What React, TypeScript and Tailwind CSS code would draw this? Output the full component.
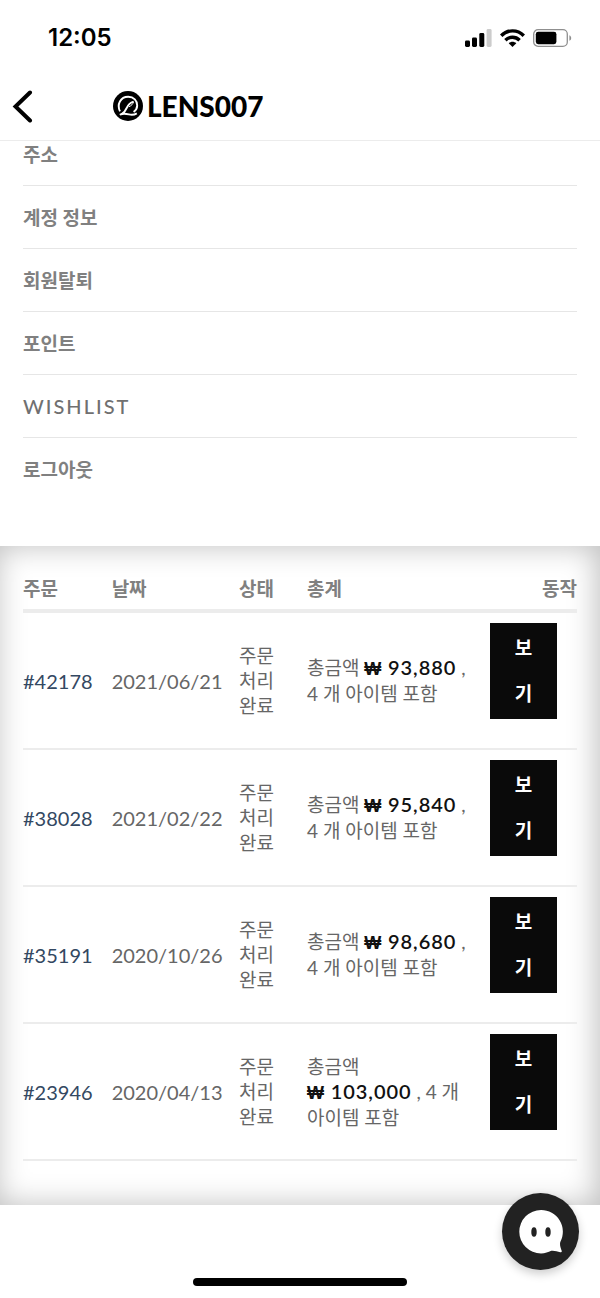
import { Fragment } from 'react';
import type { FC } from 'react';

type Order = {
  id: string;
  date: string;
  total: string;
  count: number;
};

const menuItems = ['주소', '계정 정보', '회원탈퇴', '포인트', 'WISHLIST', '로그아웃'];

const statusLines = ['주문', '처리', '완료'];

const orders: Order[] = [
  { id: '42178', date: '2021/06/21', total: '93,880', count: 4 },
  { id: '38028', date: '2021/02/22', total: '95,840', count: 4 },
  { id: '35191', date: '2020/10/26', total: '98,680', count: 4 },
  { id: '23946', date: '2020/04/13', total: '103,000', count: 4 },
];

const SignalIcon: FC = () => (
  <svg width="27" height="18" viewBox="0 0 27 18" aria-hidden="true">
    <rect x="0" y="11.5" width="5" height="6.5" rx="1.4" />
    <rect x="7" y="8.5" width="5" height="9.5" rx="1.4" />
    <rect x="14.3" y="4" width="5" height="14" rx="1.4" />
    <rect x="21.6" y="0" width="5" height="18" rx="1.4" fill="#cccccc" />
  </svg>
);

const WifiIcon: FC = () => (
  <svg width="25" height="18" viewBox="0 0 25 18" fill="none" stroke="#000" strokeWidth="3.4" aria-hidden="true">
    <path d="M1.2 6.7C7.5.2 17.5.2 23.8 6.7" />
    <path d="M5.4 11.2C9.4 7.2 15.6 7.2 19.6 11.2" />
    <path d="M8.7 14.3c2.2-2 5.4-2 7.6 0L12.5 18z" fill="#000" stroke="none" />
  </svg>
);

const BatteryIcon: FC = () => (
  <svg width="39" height="18" viewBox="0 0 39 18" aria-hidden="true">
    <rect x=".7" y=".7" width="33.6" height="16.6" rx="4.4" fill="none" stroke="#8f8f8f" strokeWidth="1.3" />
    <rect x="2.8" y="2.8" width="20.6" height="12.4" rx="2.4" />
    <path d="M36.4 6.2c2.4 1 2.4 4.6 0 5.6z" fill="#8f8f8f" />
  </svg>
);

const LogoMark: FC = () => (
  <svg width="30" height="30" viewBox="0 0 30 30" fill="none" aria-hidden="true">
    <circle cx="15" cy="15" r="15" fill="#000" />
    <path
      d="M7 20.4C3.6 13.5 7.4 5.9 15.2 5.8c5.5 0 9.2 3.8 9 8.8-.1 2.6-1.3 4.7-3.6 6.4"
      stroke="#fff"
      strokeWidth="1.9"
    />
    <path d="M20.6 10.6c-3.6 1-5.6 3.4-7 6.6-1.1 2.6-2.8 4.9-5.2 6.2" stroke="#fff" strokeWidth="2" />
    <path d="M20.4 10.8c-.4 2.3-2 3.9-4.6 5" stroke="#fff" strokeWidth="1" />
    <path d="M6.8 23.8c3-1.8 6.2-1.2 9-.4 3 .8 5.4.6 8-1" stroke="#fff" strokeWidth="1.9" />
  </svg>
);

const ChatIcon: FC = () => (
  <svg width="44" height="44" viewBox="0 0 44 44" aria-hidden="true">
    <path
      d="M22 0a21.7 21.7 0 1 0 0 43.4c4.2 0 7.3-1.3 10.2-2.6 2.8-.6 6 .6 9 1.4 1.4.4 1.9-.5 1.4-1.7-1-2.6-2.1-5.6-1.3-8.6A21.7 21.7 0 0 0 22 0z"
      fill="#fff"
    />
    <ellipse cx="15" cy="22" rx="2.7" ry="4.7" fill="#222" />
    <ellipse cx="29" cy="22" rx="2.7" ry="4.7" fill="#222" />
  </svg>
);

const StatusBar: FC = () => (
  <div className="flex h-[76px] items-center justify-between pr-7 pl-12">
    <span className="font-[Inter] text-2xl font-semibold">12:05</span>
    <div className="flex items-center gap-2">
      <SignalIcon />
      <WifiIcon />
      <BatteryIcon />
    </div>
  </div>
);

const Header: FC = () => (
  <header className="relative z-10 border-b border-[#ececec] bg-white text-black">
    <StatusBar />
    <div className="flex h-16 items-center pb-1">
      <button type="button" aria-label="뒤로" className="ml-3 w-[101px]">
        <svg width="22" height="34" viewBox="0 0 22 34" fill="none" stroke="#000" strokeWidth="4" strokeLinecap="round">
          <path d="M18 3.5 3.5 17.5 18 31.5" />
        </svg>
      </button>
      <a href="#home" className="flex items-center gap-1">
        <LogoMark />
        <span className="text-[28px] leading-8 font-black">LENS007</span>
      </a>
    </div>
  </header>
);

const AccountMenu: FC = () => (
  <nav className="-mt-[18px] px-[23px] pb-[46px]">
    <ul className="divide-y divide-[#e6e6e6]">
      {menuItems.map((item) => (
        <li key={item}>
          <a
            href="#account"
            className={
              item === 'WISHLIST'
                ? 'flex h-[62px] items-center text-xl font-medium tracking-widest text-[#707070]'
                : 'flex h-[62px] items-center pt-[2px] text-[19px] font-bold text-[#808080]'
            }
          >
            {item}
          </a>
        </li>
      ))}
    </ul>
  </nav>
);

const OrderRow: FC<{ order: Order }> = ({ order }) => (
  <tr className="border-b-2 border-[#ececec]">
    <td className="text-xl text-[#334862]">
      <a href="#order">#{order.id}</a>
    </td>
    <td className="text-xl">{order.date}</td>
    <td className="leading-[25px]">
      {statusLines.map((line, i) => (
        <Fragment key={line}>
          {i > 0 && <br />}
          {line}
        </Fragment>
      ))}
    </td>
    <td className="pr-5 leading-[25px]">
      총금액{' '}
      <span className="whitespace-nowrap">
        <span className="font-semibold tracking-wider text-[#111]">
          <span className="font-['Liberation_Sans'] text-lg leading-6">₩</span>{' '}
          <span className="text-xl leading-6">{order.total}</span>
        </span>{' '}
        ,
      </span>{' '}
      {order.count} 개 아이템 포함
    </td>
    <td className="pt-[10px] pb-[29px]">
      <button
        type="button"
        className="block w-[67px] bg-[#0a0a0a] px-6 pt-[2px] pb-[2px] text-[19px] leading-[46px] font-bold break-all text-white"
      >
        보기
      </button>
    </td>
  </tr>
);

const OrdersTable: FC = () => (
  <section className="px-[23px] pt-[31px] pb-11 shadow-[inset_-3px_0_30px_rgba(0,0,0,0.26)]">
    <table className="w-full table-fixed text-left text-[19px] leading-6 text-[#666]">
      <colgroup>
        <col className="w-[16%]" />
        <col className="w-[23%]" />
        <col className="w-[68px]" />
        <col />
        <col className="w-[87px]" />
      </colgroup>
      <thead>
        <tr className="border-b-4 border-[#ececec] text-[#808080]">
          <th className="pb-2 font-bold">주문</th>
          <th className="pb-2 font-bold">날짜</th>
          <th className="pb-2 font-bold">상태</th>
          <th className="pb-2 font-bold">총계</th>
          <th className="pb-2 text-right font-bold">동작</th>
        </tr>
      </thead>
      <tbody className="break-keep">
        {orders.map((order) => (
          <OrderRow key={order.id} order={order} />
        ))}
      </tbody>
    </table>
  </section>
);

export default function App() {
  return (
    <div className="relative min-h-screen bg-white font-[Lato,'Noto_Sans_CJK_KR',sans-serif]">
      <Header />
      <main>
        <AccountMenu />
        <OrdersTable />
      </main>
      <footer className="flex h-[93px] items-end justify-center pb-3">
        <div className="h-2 w-[214px] rounded-full bg-black" />
      </footer>
      <button
        type="button"
        aria-label="채팅 상담"
        className="absolute right-[21px] bottom-7 flex size-[77px] items-center justify-center rounded-full bg-[#222] shadow-[0_4px_10px_rgba(0,0,0,0.2)]"
      >
        <ChatIcon />
      </button>
    </div>
  );
}
